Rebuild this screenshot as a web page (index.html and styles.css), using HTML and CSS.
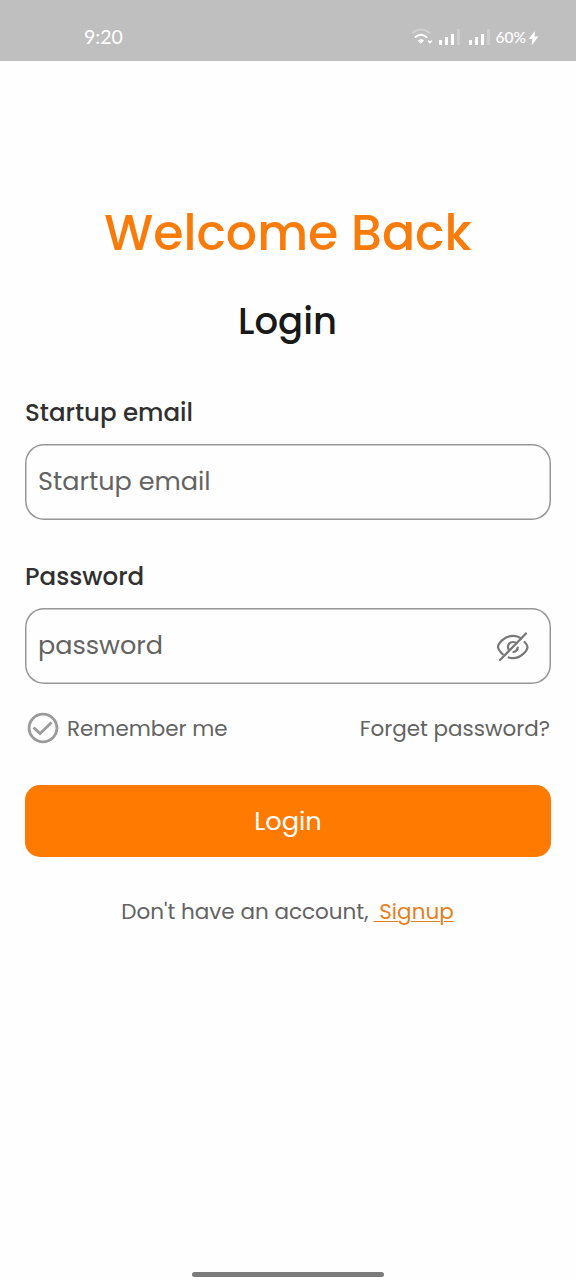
FILE: index.html
```html
<!DOCTYPE html>
<html lang="en">
<head>
<meta charset="utf-8">
<title>Login</title>
<link rel="stylesheet" href="styles.css">
</head>
<body>
<div class="screen">
  <header class="status">
    <span class="time">9:20</span>
    <div class="indicators">
      <svg class="wifi" width="24" height="18" viewBox="0 0 24 18" fill="none" stroke-linecap="round">
        <path d="M1.500 5Q10 -2 18.500 5" stroke="#d0d0d0" stroke-width="2"/>
        <path d="M4.500 9Q10 4.500 15.500 9" stroke="#fff" stroke-width="2"/>
        <path d="M7.500 12.500Q10 10.500 12.500 12.500L10 15Z" fill="#fff" stroke="#fff" stroke-width="1"/>
        <path d="M17.500 13L19 14.500L20.500 13" stroke="#fff" stroke-width="1.600"/>
      </svg>
      <svg class="signal" width="22" height="18" viewBox="0 0 22 18">
        <path d="M0 12h3v5H0zM6 9h3v8H6zM12 6h3v11h-3z" fill="#fff"/>
        <path d="M18 1h3v16h-3z" fill="#cdcdcd"/>
      </svg>
      <svg class="signal" width="22" height="18" viewBox="0 0 22 18">
        <path d="M0 12h3v5H0zM6 9h3v8H6zM12 6h3v11h-3z" fill="#fff"/>
        <path d="M18 1h3v16h-3z" fill="#cdcdcd"/>
      </svg>
      <span class="battery">60%</span>
      <svg class="bolt" width="11" height="16" viewBox="0 0 11 16"><path d="M7 1L0.500 9H4.500L3.500 15.500L10.500 6.500H6.500Z" fill="#fff"/></svg>
    </div>
  </header>
  <main class="content">
    <h1 class="welcome">Welcome Back</h1>
    <h2 class="heading">Login</h2>
    <div class="label label-email">Startup email</div>
    <div class="field"><span class="hint">Startup email</span></div>
    <div class="label label-password">Password</div>
    <div class="field">
      <span class="hint">password</span>
      <svg class="eye" width="34" height="32" viewBox="0 0 34 32" fill="none" stroke="#777" stroke-width="2.200" stroke-linecap="round" stroke-linejoin="round">
        <path d="M6.700 23.200C4.500 21 2 18 2 16C2 12.500 8.500 4.800 17 4.800Q21.800 4.800 25.200 7.300"/>
        <path d="M28.600 11Q31.500 14 31.500 16C31.500 19.500 25 27.200 17 27.200Q14.700 27.200 12.700 26.500"/>
        <path d="M12.900 18.800C10.500 15 13 11 17 11Q19.300 11 20.700 12.300"/>
        <path d="M21.800 16.500Q21.300 20 17.500 21"/>
        <path d="M4 29L30 2.500"/>
      </svg>
    </div>
    <div class="options">
      <svg class="check" width="32" height="32" viewBox="0 0 32 32" fill="none" stroke="#9b9b9b" stroke-width="2.800">
        <circle cx="16" cy="16" r="13.900"/><path d="M6.500 15.500L13 21.500L24.500 10.500"/>
      </svg>
      <span class="remember">Remember me</span>
      <span class="forgot">Forget password?</span>
    </div>
    <div class="submit">Login</div>
    <p class="signup"><span class="prompt">Don't have an account,</span><span class="link">&nbsp;Signup</span></p>
  </main>
  <div class="home"></div>
</div>
</body>
</html>
```
FILE: styles.css
```css
body { margin: 0; background: #fff; }
.screen {
  width: 576px; height: 1280px; overflow: hidden;
  display: flex; flex-direction: column;
  font-family: Poppins, Inter, sans-serif;
  background: #fefefe; color: #636363; white-space: nowrap;
}
.status {
  height: 61px; box-sizing: border-box; padding: 12px 37px 0 84px;
  display: flex; justify-content: space-between; align-items: flex-start;
  background: #bfbfbf; color: #fff;
}
.time { font: 19.5px/50px Lato, sans-serif; }
.indicators { display: flex; align-items: center; height: 49px; }
.wifi { margin-right: 4px; }
.signal { margin-right: 8px; }
.signal + .battery { margin-left: -3px; }
.battery { font: 500 15.5px/48px Lato, sans-serif; margin-right: 2px; }
.bolt { margin-top: 2px; }
.content { flex: 1; padding: 0 25px; }
.welcome { margin: 137px 0 0; text-align: center; font-size: 49px; line-height: 70px; font-weight: 500; color: #f97c0b; }
.heading { margin: 25px 1px 0 0; text-align: center; font-size: 37px; line-height: 56px; font-weight: 500; color: #191919; }
.label { font-size: 24.5px; line-height: 36px; font-weight: 500; color: #303030; }
.label-email { margin-top: 46px; }
.label-password { margin-top: 39px; }
.field {
  height: 76px; margin: 13px 0 0; box-sizing: border-box; padding: 0 21px 0 13px;
  box-shadow: inset 0 0 0 1.5px #969696; border-radius: 19px;
  display: flex; align-items: center; justify-content: space-between;
}
.hint { font-size: 25.5px; line-height: 36px; padding-bottom: 2px; }
.eye { margin-top: 2px; }
.options { height: 36px; margin: 26px 1px 0 2px; display: flex; align-items: center; font-size: 21.45px; }
.remember { margin-left: 8px; padding-top: 1px; }
.forgot { margin-left: auto; padding-top: 1px; }
.submit {
  height: 72px; margin: 39px 0 0; border-radius: 15px; background: #ff7a00; color: #fff;
  font-size: 25.6px; line-height: 73px; text-align: center;
}
.signup { margin: 37px 1px 0 0; display: flex; justify-content: center; font-size: 21.5px; line-height: 36px; }
.link { margin-left: 5px; color: #e5801f; text-decoration: underline; text-decoration-thickness: 1px; text-underline-offset: 2px; }
.home { width: 192px; height: 5px; margin: 0 auto 3px; border-radius: 3px; background: #7b7b7b; }
```
